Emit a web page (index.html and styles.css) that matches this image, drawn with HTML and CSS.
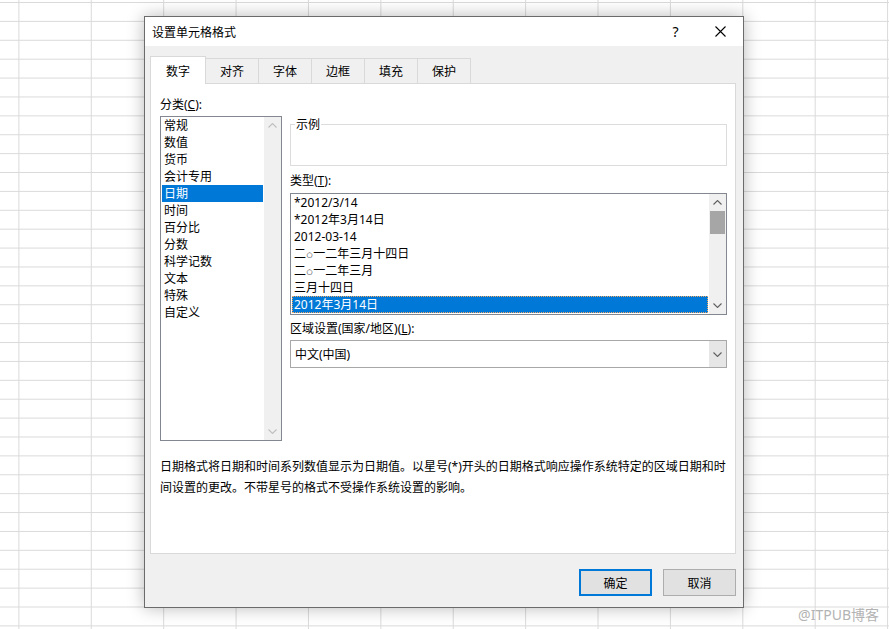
FILE: index.html
```html
<!DOCTYPE html>
<html>
<head>
    <link rel="stylesheet" href="styles.css">
</head>
<body>
    <div class="dialog">
        <div class="titlebar">
            <span class="title">设置单元格格式</span>
            <span class="tbtn help">?</span>
            <span class="tbtn close">
                <svg width="11" height="11" viewBox="0 0 11 11"><path d="M0.5 0.5 L10.5 10.5 M10.5 0.5 L0.5 10.5" stroke="#000" stroke-width="1.1" fill="none"/></svg>
            </span>
        </div>
        <div class="dialog-body">
            <div class="tabs">
                <div class="tab active">数字</div>
                <div class="tab">对齐</div>
                <div class="tab">字体</div>
                <div class="tab">边框</div>
                <div class="tab">填充</div>
                <div class="tab">保护</div>
            </div>
            <div class="panel">
                <div class="panel-grid">
                    <div class="col-left">
                        <div class="label">分类(<u>C</u>):</div>
                        <div class="listbox category">
                            <ul class="items">
                                <li>常规</li>
                                <li>数值</li>
                                <li>货币</li>
                                <li>会计专用</li>
                                <li class="sel">日期</li>
                                <li>时间</li>
                                <li>百分比</li>
                                <li>分数</li>
                                <li>科学记数</li>
                                <li>文本</li>
                                <li>特殊</li>
                                <li>自定义</li>
                            </ul>
                            <div class="scrollbar off">
                                <div class="sb-arrow"><svg width="9" height="5" viewBox="0 0 9 5"><path d="M0.5 4.5 L4.5 0.5 L8.5 4.5" /></svg></div>
                                <div class="sb-track"></div>
                                <div class="sb-arrow"><svg width="9" height="5" viewBox="0 0 9 5"><path d="M0.5 0.5 L4.5 4.5 L8.5 0.5" /></svg></div>
                            </div>
                        </div>
                    </div>
                    <div class="col-right">
                        <div class="sample"><span class="sample-title">示例</span></div>
                        <div class="label type-label">类型(<u>T</u>):</div>
                        <div class="listbox types">
                            <ul class="items">
                                <li>*2012/3/14</li>
                                <li>*2012年3月14日</li>
                                <li>2012-03-14</li>
                                <li>二<span class="ling">○</span>一二年三月十四日</li>
                                <li>二<span class="ling">○</span>一二年三月</li>
                                <li>三月十四日</li>
                                <li class="sel focus">2012年3月14日</li>
                            </ul>
                            <div class="scrollbar">
                                <div class="sb-arrow"><svg width="9" height="5" viewBox="0 0 9 5"><path d="M0.5 4.5 L4.5 0.5 L8.5 4.5" /></svg></div>
                                <div class="sb-track"><div class="sb-thumb"></div></div>
                                <div class="sb-arrow"><svg width="9" height="5" viewBox="0 0 9 5"><path d="M0.5 0.5 L4.5 4.5 L8.5 0.5" /></svg></div>
                            </div>
                        </div>
                        <div class="label region-label">区域设置(国家/地区)(<u>L</u>):</div>
                        <div class="select">
                            <span class="select-text">中文(中国)</span>
                            <span class="select-btn"><svg width="9" height="5" viewBox="0 0 9 5"><path d="M0.5 0.5 L4.5 4.5 L8.5 0.5" /></svg></span>
                        </div>
                    </div>
                </div>
                <p class="desc">日期格式将日期和时间系列数值显示为日期值。以星号(*)开头的日期格式响应操作系统特定的区域日期和时<br>间设置的更改。不带星号的格式不受操作系统设置的影响。</p>
            </div>
            <div class="buttons">
                <button class="btn default">确定</button>
                <button class="btn">取消</button>
            </div>
        </div>
    </div>
    <div class="watermark">@ITPUB博客</div>
</body>
</html>
```

FILE: styles.css
```css
body {
    margin: 0;
    padding: 16px 0 0 0;
    height: 629px;
    box-sizing: border-box;
    overflow: hidden;
    position: relative;
    font-family: "Noto Sans", "Noto Sans CJK SC", sans-serif;
    font-size: 12px;
    color: #000;
    background-color: #fff;
    background-image:
        linear-gradient(to bottom, #dadada 1px, transparent 1px),
        linear-gradient(to right, #dadada 1px, transparent 1px);
    background-size: 100% 18.9px, 72.4px 100%;
    background-position: 0 2px, 18.4px 0;
}

.dialog {
    margin-left: 144px;
    width: 600px;
    height: 592px;
    box-sizing: border-box;
    border: 1px solid #6b6b6b;
    background-color: #f0f0f0;
    box-shadow: 0 0 16px rgba(0, 0, 0, 0.28);
}

.titlebar {
    height: 29px;
    background-color: #fff;
    display: flex;
    align-items: center;
}

.title {
    flex: 1;
    padding-left: 7px;
}

.tbtn {
    width: 45px;
    height: 29px;
    display: flex;
    align-items: center;
    justify-content: center;
}

.help {
    font-size: 14px;
}

.dialog-body {
    padding: 10px 7px 0 5px;
}

.tabs {
    display: flex;
    align-items: flex-end;
    height: 27px;
}

.tab {
    width: 53px;
    height: 25px;
    box-sizing: border-box;
    border: 1px solid #d9d9d9;
    border-left: none;
    border-bottom: none;
    background-color: #f0f0f0;
    display: flex;
    align-items: center;
    justify-content: center;
}

.tab.active {
    width: 56px;
    height: 28px;
    margin-bottom: -1px;
    border-left: 1px solid #d9d9d9;
    background-color: #fff;
    position: relative;
    z-index: 1;
}

.panel {
    height: 471px;
    box-sizing: border-box;
    background-color: #fff;
    border: 1px solid #d9d9d9;
    padding: 12px 8px 0 9px;
}

.panel-grid {
    display: grid;
    grid-template-columns: 122px 437px;
    column-gap: 8px;
}

.label {
    height: 17px;
    line-height: 17px;
}

.listbox {
    display: flex;
    box-sizing: border-box;
    border: 1px solid #828790;
    background-color: #fff;
}

.category {
    height: 325px;
    margin-top: 3px;
}

.items {
    flex: 1;
    margin: 0;
    padding: 0;
    list-style: none;
}

.items li {
    height: 17px;
    line-height: 17px;
    margin: 0 1px;
    padding-left: 2px;
    white-space: nowrap;
}

.items li.sel {
    background-color: #0078d7;
    color: #fff;
}

.items li.focus {
    outline: 1px dotted #f0a860;
    outline-offset: -1px;
}

.ling {
    font-family: "DejaVu Sans", sans-serif;
    font-size: 7px;
    vertical-align: 1px;
    margin: 0 0.5px;
}

.scrollbar {
    width: 17px;
    background-color: #f0f0f0;
    display: flex;
    flex-direction: column;
}

.sb-arrow {
    height: 17px;
    display: flex;
    align-items: center;
    justify-content: center;
}

.sb-arrow path,
.select-btn path {
    fill: none;
    stroke: #606060;
    stroke-width: 1.1;
}

.scrollbar.off path {
    stroke: #bfbfbf;
}

.sb-track {
    flex: 1;
}

.sb-thumb {
    height: 23px;
    margin: 0 1px;
    background-color: #a6a6a6;
}

.sample {
    position: relative;
    height: 42px;
    margin-top: 28px;
    box-sizing: border-box;
    border: 1px solid #dcdcdc;
}

.sample-title {
    position: absolute;
    top: -9px;
    left: 4px;
    padding: 0 1px;
    line-height: 17px;
    background-color: #fff;
}

.type-label {
    margin-top: 6px;
}

.types {
    height: 122px;
    margin-top: 4px;
}

.region-label {
    margin-top: 5px;
}

.select {
    height: 28px;
    margin-top: 3px;
    box-sizing: border-box;
    border: 1px solid #a8a8a8;
    display: flex;
    align-items: center;
}

.select-text {
    flex: 1;
    padding-left: 4px;
}

.select-btn {
    width: 17px;
    align-self: stretch;
    background-color: #e6e6e6;
    display: flex;
    align-items: center;
    justify-content: center;
}

.desc {
    margin: 15px 0 0;
    line-height: 21px;
}

.buttons {
    display: flex;
    justify-content: flex-end;
    gap: 11px;
    margin-top: 15px;
}

.btn {
    width: 73px;
    height: 27px;
    padding: 0;
    font: inherit;
    color: #000;
    background-color: #e1e1e1;
    border: 1px solid #adadad;
}

.btn.default {
    border: 2px solid #0078d7;
}

.watermark {
    position: absolute;
    right: 10px;
    top: 604px;
    font-size: 14px;
    color: #b3b3b3;
}
```
